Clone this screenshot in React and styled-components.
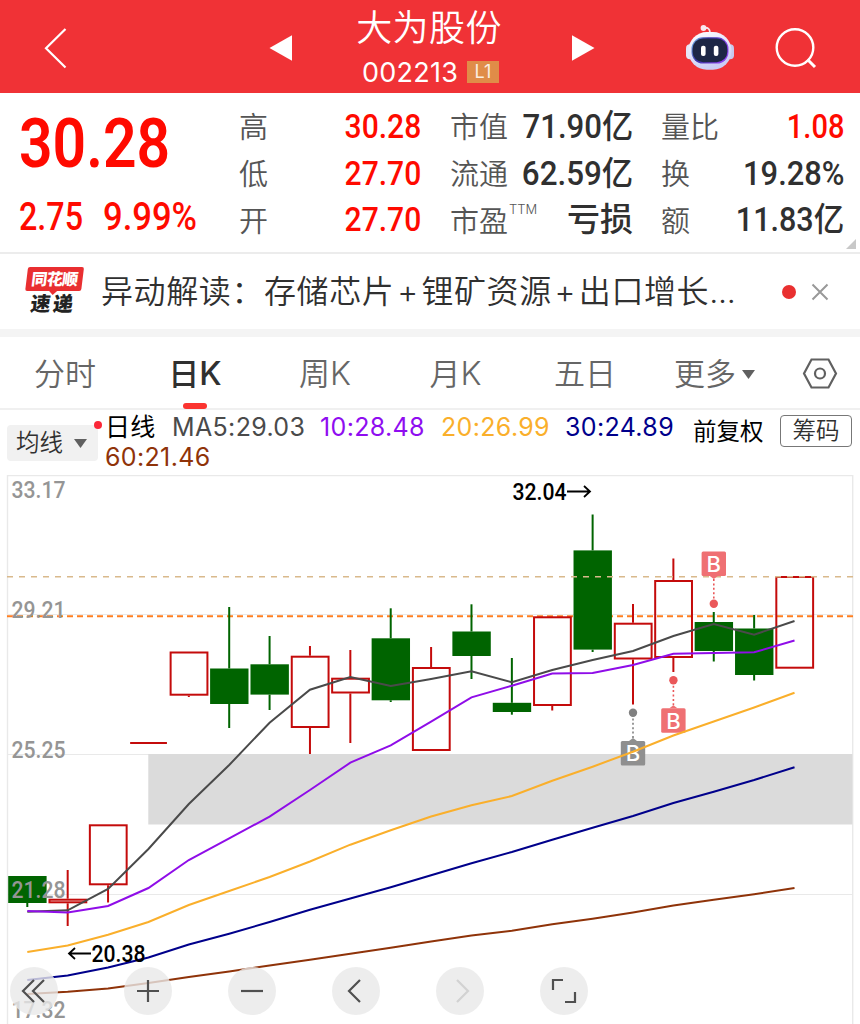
import React from "react";
import styled, { createGlobalStyle } from "styled-components";

const GlobalStyle = createGlobalStyle`
  * {
    box-sizing: border-box;
  }
  body {
    margin: 0;
    background: #ffffff;
    font-family: Inter, "Noto Sans CJK SC", sans-serif;
    overflow: hidden;
  }
`;

const Page = styled.div`
  width: 860px;
  height: 1024px;
  display: flex;
  flex-direction: column;
  overflow: hidden;
  background: #ffffff;
`;

/* condensed figures, squeezed towards one side */
const Figure = styled.span`
  display: inline-block;
  font-family: Roboto, "Noto Sans CJK SC", sans-serif;
  font-weight: ${(p) => p.$weight || 500};
  font-size: ${(p) => p.$size || 33}px;
  line-height: 1;
  color: ${(p) => p.$color || "#303030"};
  white-space: nowrap;
  transform: scaleX(${(p) => p.$squeeze || 0.91});
  transform-origin: ${(p) => p.$origin || "right"} center;
`;

/* ---------- header ---------- */

const Header = styled.header`
  height: 93px;
  flex: none;
  display: grid;
  grid-template-columns: 265px 330px 1fr;
  background: #f03236;
  color: #ffffff;
`;

const HeaderSide = styled.div`
  display: flex;
  align-items: center;
  gap: ${(p) => p.$gap || 0}px;
  padding: 3px 0 0 ${(p) => p.$left}px;
`;

const StockSwitch = styled.div`
  display: flex;
  align-items: center;
  justify-content: space-between;
  padding: 2px 0 0 4px;
`;

const StockName = styled.div`
  display: flex;
  flex-direction: column;
  align-items: center;
  height: 91px;
  padding: 1px 6px 0 0;
`;

const Title = styled.h1`
  margin: 0;
  font-size: 36px;
  line-height: 51px;
  font-weight: 350;
  letter-spacing: 0.4px;
`;

const CodeLine = styled.div`
  display: flex;
  align-items: center;
  gap: 9px;
  height: 36px;
  padding-left: 3px;
  font-size: 27px;
  letter-spacing: 0.25px;
`;

const Level = styled.span`
  width: 32px;
  height: 22px;
  line-height: 22px;
  text-align: center;
  font-size: 18px;
  background: #e08c48;
  color: #fbeee0;
`;

/* ---------- quote ---------- */

const Quote = styled.section`
  height: 161px;
  flex: none;
  display: grid;
  grid-template-columns: 239px 182px 29px 183px 28px 183px;
  border-bottom: 2px solid #ececec;
  padding-top: 10px;
`;

const PriceBox = styled.div`
  padding-left: 19px;
`;

const Price = styled.div`
  height: 82px;
  display: flex;
  align-items: center;
`;

const Change = styled.div`
  display: flex;
  align-items: center;
  height: 64px;
`;

const ChangeValue = styled.div`
  width: ${(p) => p.$width}px;
`;

const Stats = styled.div`
  display: grid;
  grid-template-rows: repeat(3, 46.7px);
  grid-column: ${(p) => p.$col};
`;

const Stat = styled.div`
  display: flex;
  justify-content: space-between;
  align-items: center;
  white-space: nowrap;
`;

const StatLabel = styled.span`
  font-size: 29px;
  line-height: 41px;
  height: 38px;
  font-weight: 350;
  color: #555555;
`;

const Sup = styled.sup`
  display: inline-block;
  font-size: 13px;
  line-height: 13px;
  vertical-align: 18px;
  margin-left: 1px;
`;

const Corner = styled.svg`
  position: absolute;
  left: 846px;
  top: 239px;
`;

/* ---------- news ---------- */

const News = styled.section`
  height: 83px;
  flex: none;
  display: flex;
  align-items: center;
  border-bottom: 8px solid #f4f4f4;
  padding-left: 22px;
`;

const Brand = styled.div`
  width: 62px;
  height: 50px;
  display: flex;
  flex-direction: column;
  align-items: center;
  margin-right: 17px;
  font-weight: 900;
  transform: skewX(-7deg);
`;

const BrandTop = styled.div`
  width: 56px;
  height: 25px;
  line-height: 24px;
  text-align: center;
  font-size: 16px;
  letter-spacing: -0.6px;
  border-radius: 2px;
  background: #e92f31;
  color: #ffffff;
`;

const BrandTail = styled.svg`
  display: block;
  flex: none;
`;

const BrandBottom = styled.div`
  margin-top: -3px;
  padding-left: 3px;
  font-size: 20px;
  line-height: 25px;
  letter-spacing: 2.5px;
  color: #222222;
`;

const Headline = styled.div`
  width: 681px;
  font-size: 32px;
  line-height: 44px;
  font-weight: 350;
  letter-spacing: 0.6px;
  color: #303030;
  white-space: nowrap;
`;

const Plus = styled.span`
  display: inline-block;
  width: 27px;
  text-align: center;
`;

const Ellipsis = styled.span`
  letter-spacing: -0.3px;
`;

const Unread = styled.span`
  width: 14px;
  height: 14px;
  border-radius: 50%;
  background: #e93030;
  margin-right: 15px;
`;

/* ---------- period tabs ---------- */

const Tabs = styled.nav`
  height: 73px;
  flex: none;
  display: grid;
  grid-template-columns: 130px 130px 130px 131px 128px 131px 80px;
  border-bottom: 2px solid #f0f0f0;
`;

const Tab = styled.div`
  display: flex;
  flex-direction: column;
  align-items: center;
  padding-top: 16px;
  font-size: 31px;
  line-height: 42px;
  font-weight: ${(p) => (p.$active ? 500 : 350)};
  color: ${(p) => (p.$active ? "#303030" : "#666666")};
`;

const TabText = styled.div`
  display: flex;
  align-items: center;
  gap: 6px;
`;

const Latin = styled.span`
  font-size: 32.5px;
`;

const Underline = styled.div`
  width: 24px;
  height: 6px;
  margin-top: 8px;
  border-radius: 3px;
  background: #fb3430;
`;

/* ---------- indicator legend ---------- */

const Legend = styled.section`
  height: 65px;
  flex: none;
  display: flex;
  align-items: flex-start;
  padding-left: 7px;
`;

const Picker = styled.div`
  position: relative;
  width: 91px;
  height: 36px;
  margin-top: 15px;
  padding-left: 9px;
  display: flex;
  align-items: center;
  gap: 11px;
  border-radius: 4px;
  background: #f1f1f1;
  font-size: 23.5px;
  line-height: 32px;
  font-weight: 350;
  color: #303030;
`;

const PickerDot = styled.span`
  position: absolute;
  right: -4px;
  top: -4px;
  width: 8px;
  height: 8px;
  border-radius: 50%;
  background: #fb2738;
`;

const Averages = styled.div`
  width: 595px;
  display: flex;
  flex-wrap: wrap;
  align-items: center;
  padding: 2px 0 0 7px;
`;

const Average = styled.span`
  font-size: 25px;
  line-height: 30px;
  height: 30px;
  letter-spacing: 0.35px;
  color: ${(p) => p.$color};
  width: ${(p) => p.$width}px;
  white-space: nowrap;
`;

const Adjust = styled.div`
  width: 87px;
  margin-top: 5px;
  font-size: 23.5px;
  line-height: 34px;
  white-space: nowrap;
`;

const Chips = styled.div`
  width: 72px;
  height: 32px;
  margin-top: 5px;
  border: 1px solid #777777;
  border-radius: 4px;
  font-size: 23.5px;
  line-height: 30px;
  text-align: center;
  font-weight: 350;
  color: #303030;
`;

/* ---------- chart ---------- */

const ChartArea = styled.section`
  position: relative;
  height: 549px;
  flex: none;
`;

const ChartSvg = styled.svg`
  display: block;
`;

const AxisText = styled.text`
  font-family: Roboto, sans-serif;
  font-size: 24px;
  font-weight: 500;
  fill: #959595;
`;

const MarkText = styled.text`
  font-family: Roboto, sans-serif;
  font-size: 24px;
  font-weight: 500;
  fill: #000000;
`;

const FlagText = styled.text`
  font-family: Inter, sans-serif;
  font-size: 22px;
  font-weight: 500;
  fill: #ffffff;
  text-anchor: middle;
`;

const Controls = styled.div`
  position: absolute;
  left: 10px;
  top: 492px;
  display: flex;
  gap: 56px;
`;

const RoundButton = styled.button`
  width: 48px;
  height: 48px;
  padding: 0;
  border: none;
  border-radius: 50%;
  background: rgba(232, 232, 232, 0.8);
  margin-right: ${(p) => p.$after || 0}px;
`;

const RED = "#c40b0b";
const GREEN = "#006400";

const centerOf = (i) => 27.3 + 40.38 * i;

// [kind, top, bottom, high, low]
const candles = [
  ["g", 876, 903, 876, 907],
  ["r", 898.7, 903.3, 870, 926],
  ["r", 824.3, 885.3, 824.3, 902.5],
  ["flat", 743, 743, 743, 743],
  ["r", 651.5, 695.7, 651.5, 697],
  ["g", 668.5, 704, 607, 728],
  ["g", 664.3, 694.6, 636, 710],
  ["r", 655.7, 728, 646, 754],
  ["r", 677.7, 693.5, 650, 743],
  ["g", 638.3, 700.3, 608.3, 702],
  ["r", 667, 751, 647, 751],
  ["g", 631.5, 656, 604.3, 679],
  ["g", 702.8, 712, 658, 714.7],
  ["r", 616.3, 706, 616.3, 710.5],
  ["g", 550.4, 649.6, 514.5, 652],
  ["r", 622.7, 659.5, 604, 704.5],
  ["r", 580, 658, 558.5, 672],
  ["g", 622, 651, 612, 661.5],
  ["g", 628.5, 675, 615, 680.5],
  ["r", 576, 668.7, 576, 668.7],
];

const averages = [
  {
    color: "#8f3309",
    points: [
      994, 991.7, 988.5, 983, 977, 971.5, 965.5, 959.7, 953.7, 947.7, 941.5,
      935.5, 930.7, 924.3, 918.7, 912.5, 905.5, 899.7, 894.3, 888,
    ],
  },
  {
    color: "#00008b",
    points: [
      980, 975.5, 967.5, 957.5, 944.5, 933.7, 922, 909.7, 898.5, 887.3, 875.3,
      863.3, 852, 839.7, 827.7, 816, 803, 791.7, 780, 767.3,
    ],
  },
  {
    color: "#faaf2b",
    points: [
      952, 945.5, 934.7, 922, 905, 891, 877, 861.5, 844.7, 830.3, 816.5, 805.3,
      796, 780.7, 766.7, 751.7, 735.5, 721.5, 707.5, 692.7,
    ],
  },
  {
    color: "#4a4a4a",
    points: [
      911.7, 910.3, 889, 849, 804, 765, 722.7, 689.7, 677, 686, 679, 671.3,
      682.3, 670, 660, 651, 636, 624, 634.7, 621,
    ],
  },
  {
    color: "#8f0de8",
    points: [
      911, 912.5, 906, 888, 860, 838.3, 816.7, 790, 762.7, 745.3, 721.7, 697.3,
      685.7, 673.5, 673, 665, 653.7, 653, 652.3, 640.5,
    ],
  },
];

const flags = [
  { x: 713.8, dot: 603.8, box: 551.5, color: "#ea5759", fill: "#ef7073" },
  { x: 673.4, dot: 680.2, box: 708.3, color: "#ea5759", fill: "#ef7073" },
  { x: 633, dot: 712.8, box: 741, color: "#808080", fill: "#8f8f8f" },
];

const Candle = ({ index, data }) => {
  const [kind, top, bottom, high, low] = data;
  const x = centerOf(index);
  if (kind === "flat") {
    return (
      <line x1={x - 18.3} x2={x + 18.5} y1={top} y2={top} stroke={RED} strokeWidth="2" />
    );
  }
  const color = kind === "g" ? GREEN : RED;
  return (
    <g stroke={color} strokeWidth="2">
      {high < top && <line x1={x} x2={x} y1={high} y2={top} />}
      {low > bottom && <line x1={x} x2={x} y1={bottom} y2={low} />}
      {kind === "g" ? (
        <rect x={x - 19.1} y={top} width="38.4" height={bottom - top} fill={GREEN} stroke="none" />
      ) : (
        <rect x={x - 18.2} y={top + 1} width="36.8" height={bottom - top - 2} fill="none" />
      )}
    </g>
  );
};

const Flag = ({ x, dot, box, color, fill }) => {
  const above = box < dot;
  const edge = above ? box + 24.5 : box;
  const tip = above ? edge + 3 : edge - 3;
  return (
    <g>
      <line x1={x} x2={x} y1={tip} y2={dot} stroke={color} strokeWidth="1.6" strokeDasharray="2 2.4" />
      <circle cx={x} cy={dot} r="4.2" fill={color} />
      <path d={`M${x - 4} ${edge}L${x} ${tip}L${x + 4} ${edge}z`} fill={fill} />
      <rect x={x - 12.2} y={box} width="24.4" height="24.5" rx="1.5" fill={fill} />
      <FlagText x={x} y={box + 20.3}>B</FlagText>
    </g>
  );
};

const KLineChart = () => (
  <ChartSvg width="860" height="549" viewBox="0 475 860 549">
    <g stroke="#e9e9e9" strokeWidth="1.4">
      <path d="M7.5 1024V475.5H852.7V1024" fill="none" />
      <path d="M8 614.5H852M8 754.5H852M8 894.5H852" strokeWidth="1" />
    </g>
    <rect x="148.3" y="754" width="704" height="70.5" fill="#dbdbdb" />
    <line x1="7" x2="853" y1="616.3" y2="616.3" stroke="#ff7f1f" strokeWidth="2.1" strokeDasharray="6 4" />
    {candles.map((c, i) => (
      <Candle key={i} index={i} data={c} />
    ))}
    <line x1="7" x2="853" y1="576.8" y2="576.8" stroke="#d9b98c" strokeWidth="1.4" strokeDasharray="6 6" />
    {flags.map((f) => (
      <Flag key={f.x} {...f} />
    ))}
    {averages.map((a) => (
      <polyline
        key={a.color}
        points={a.points.map((y, i) => `${centerOf(i)},${y}`).join(" ")}
        fill="none"
        stroke={a.color}
        strokeWidth="2"
      />
    ))}
    {[
      ["33.17", 498],
      ["29.21", 618],
      ["25.25", 758],
      ["21.28", 897.5],
      ["17.32", 1017.5],
    ].map(([label, y]) => (
      <AxisText key={label} x="11.5" y={y} textLength="54" lengthAdjust="spacingAndGlyphs">
        {label}
      </AxisText>
    ))}
    <MarkText x="512.5" y="500" textLength="54" lengthAdjust="spacingAndGlyphs">32.04</MarkText>
    <path d="M567 491.5H590M584 486L590 491.5L584 497" stroke="#000" strokeWidth="1.8" fill="none" />
    <MarkText x="91.5" y="962" textLength="54" lengthAdjust="spacingAndGlyphs">20.38</MarkText>
    <path d="M91 953.5H69M75 948L69 953.5L75 959" stroke="#000" strokeWidth="1.8" fill="none" />
  </ChartSvg>
);

const Glyph = ({ d, color = "#505050" }) => (
  <svg width="48" height="48" viewBox="0 0 48 48" fill="none" stroke={color} strokeWidth="2.2">
    <path d={d} />
  </svg>
);

const Robot = () => (
  <svg width="50" height="46" viewBox="0 0 50 46">
    <defs>
      <linearGradient id="shell" x1="0" y1="0" x2="0.4" y2="1">
        <stop offset="0" stopColor="#ffffff" />
        <stop offset="1" stopColor="#cbcdf5" />
      </linearGradient>
      <linearGradient id="visor" x1="0" y1="0" x2="1" y2="0.4">
        <stop offset="0" stopColor="#7cc4f0" />
        <stop offset="0.4" stopColor="#3b35a8" />
        <stop offset="1" stopColor="#8b43ef" />
      </linearGradient>
    </defs>
    <path d="M18.5 3C23 2 25 4 25 8" stroke="#f8e4ec" strokeWidth="1.8" fill="none" />
    <circle cx="18.5" cy="3" r="2.9" fill="#f8eaf2" />
    <rect x="1" y="19.3" width="9" height="15" rx="4" fill="#e6e6f6" />
    <rect x="40" y="19.3" width="9" height="15" rx="4" fill="#c8c9ee" />
    <rect x="3.3" y="7" width="43.2" height="37.7" rx="18.5" fill="url(#shell)" />
    <rect x="6.5" y="12.3" width="37" height="26.2" rx="11.5" fill="url(#visor)" />
    <rect x="7.6" y="13.4" width="34.8" height="23.8" rx="10.5" fill="#1d2746" />
    <rect x="16" y="20.7" width="4.6" height="10.3" rx="2" fill="#ffffff" />
    <rect x="28.8" y="20.7" width="4.6" height="10.3" rx="2" fill="#ffffff" />
  </svg>
);

const columns = [
  {
    col: 2,
    rows: [
      { label: "高", value: "30.28", up: true },
      { label: "低", value: "27.70", up: true },
      { label: "开", value: "27.70", up: true },
    ],
  },
  {
    col: 4,
    rows: [
      { label: "市值", value: "71.90亿", squeeze: 0.945 },
      { label: "流通", value: "62.59亿", squeeze: 0.95 },
      { label: "市盈", value: "亏损", sup: "TTM", squeeze: 1 },
    ],
  },
  {
    col: 6,
    rows: [
      { label: "量比", value: "1.08", up: true, squeeze: 0.88 },
      { label: "换", value: "19.28%", squeeze: 0.935 },
      { label: "额", value: "11.83亿", squeeze: 0.925 },
    ],
  },
];

const App = () => (
  <Page>
    <GlobalStyle />
    <Header>
      <HeaderSide $left={43}>
        <svg width="24" height="42" viewBox="0 0 24 42" fill="none" stroke="#fff" strokeWidth="2.2">
          <path d="M22.5 2L3 21.3L22.5 40.5" />
        </svg>
      </HeaderSide>
      <StockSwitch>
        <svg width="24" height="26" viewBox="0 0 24 26">
          <path d="M0.5 13L23 0.3V25.7z" fill="#fff" />
        </svg>
        <StockName>
          <Title>大为股份</Title>
          <CodeLine>
            002213<Level>L1</Level>
          </CodeLine>
        </StockName>
        <svg width="24" height="26" viewBox="0 0 24 26">
          <path d="M23.5 13L1 0.3V25.7z" fill="#fff" />
        </svg>
      </StockSwitch>
      <HeaderSide $left={90} $gap={40}>
        <Robot />
        <svg width="42" height="42" viewBox="0 0 42 42" fill="none" stroke="#fff" strokeWidth="2.4">
          <circle cx="20" cy="20.5" r="18.3" />
          <path d="M32.5 32.5L40 40" strokeWidth="3" />
        </svg>
      </HeaderSide>
    </Header>

    <Quote>
      <PriceBox>
        <Price>
          <Figure $size={68} $weight={600} $color="#ff0a00" $squeeze={0.865} $origin="left">
            30.28
          </Figure>
        </Price>
        <Change>
          <ChangeValue $width={84}>
            <Figure $size={38} $color="#ff0a00" $squeeze={0.85} $origin="left">2.75</Figure>
          </ChangeValue>
          <ChangeValue $width={100}>
            <Figure $size={38} $color="#ff0a00" $squeeze={0.91} $origin="left">9.99%</Figure>
          </ChangeValue>
        </Change>
      </PriceBox>
      {columns.map((c) => (
        <Stats key={c.col} $col={c.col}>
          {c.rows.map((r) => (
            <Stat key={r.label}>
              <StatLabel>
                {r.label}
                {r.sup && <Sup>{r.sup}</Sup>}
              </StatLabel>
              <Figure $color={r.up ? "#ff0a00" : "#303030"} $squeeze={r.squeeze}>
                {r.value}
              </Figure>
            </Stat>
          ))}
        </Stats>
      ))}
      <Corner width="10" height="10" viewBox="0 0 10 10">
        <path d="M10 0V10H0z" fill="#c8c8c8" />
      </Corner>
    </Quote>

    <News>
      <Brand>
        <BrandTop>同花顺</BrandTop>
        <BrandTail width="8" height="4" viewBox="0 0 8 4">
          <path d="M0 0H8L4 4z" fill="#e92f31" />
        </BrandTail>
        <BrandBottom>速递</BrandBottom>
      </Brand>
      <Headline>
        异动解读：存储芯片<Plus>+</Plus>锂矿资源<Plus>+</Plus>出口增长
        <Ellipsis>...</Ellipsis>
      </Headline>
      <Unread />
      <svg width="18" height="18" viewBox="0 0 18 18" fill="none" stroke="#999" strokeWidth="2">
        <path d="M1.5 1.5L16.5 16.5M16.5 1.5L1.5 16.5" />
      </svg>
    </News>

    <Tabs>
      <Tab>分时</Tab>
      <Tab $active>
        <span>日<Latin>K</Latin></span>
        <Underline />
      </Tab>
      <Tab>
        <span>周<Latin>K</Latin></span>
      </Tab>
      <Tab>
        <span>月<Latin>K</Latin></span>
      </Tab>
      <Tab>五日</Tab>
      <Tab>
        <TabText>
          更多
          <svg width="13" height="9" viewBox="0 0 13 9">
            <path d="M0 0H13L6.5 9z" fill="#606060" />
          </svg>
        </TabText>
      </Tab>
      <Tab>
        <TabText>
          <svg width="36" height="42" viewBox="0 0 36 42" fill="none" stroke="#606060" strokeWidth="2.2">
            <path d="M9.5 6.5H26.5L34 20.5L26.5 34.5H9.5L2 20.5z" />
            <circle cx="18" cy="20.5" r="5" />
          </svg>
        </TabText>
      </Tab>
    </Tabs>

    <Legend>
      <Picker>
        均线
        <svg width="13" height="9" viewBox="0 0 13 9">
          <path d="M0 0H13L6.5 9z" fill="#606060" />
        </svg>
        <PickerDot />
      </Picker>
      <Averages>
        <Average $color="#000000" $width={67}>日线</Average>
        <Average $color="#4a4a4a" $width={148}>MA5:29.03</Average>
        <Average $color="#8f0df0" $width={121}>10:28.48</Average>
        <Average $color="#faaf2b" $width={124}>20:26.99</Average>
        <Average $color="#00008b" $width={114}>30:24.89</Average>
        <Average $color="#8f3309" $width={112}>60:21.46</Average>
      </Averages>
      <Adjust>前复权</Adjust>
      <Chips>筹码</Chips>
    </Legend>

    <ChartArea>
      <KLineChart />
      <Controls>
        <RoundButton $after={10}>
          <Glyph d="M24 13L13 24L24 35M34 13L23 24L34 35" />
        </RoundButton>
        <RoundButton>
          <Glyph d="M24 13V35M13 24H35" />
        </RoundButton>
        <RoundButton>
          <Glyph d="M13 24H35" />
        </RoundButton>
        <RoundButton>
          <Glyph d="M28 13L17 24L28 35" />
        </RoundButton>
        <RoundButton>
          <Glyph d="M21 13L32 24L21 35" color="#d2d2d2" />
        </RoundButton>
        <RoundButton>
          <Glyph d="M13 23V13H23M35 25V35H25" />
        </RoundButton>
      </Controls>
    </ChartArea>
  </Page>
);

export default App;
